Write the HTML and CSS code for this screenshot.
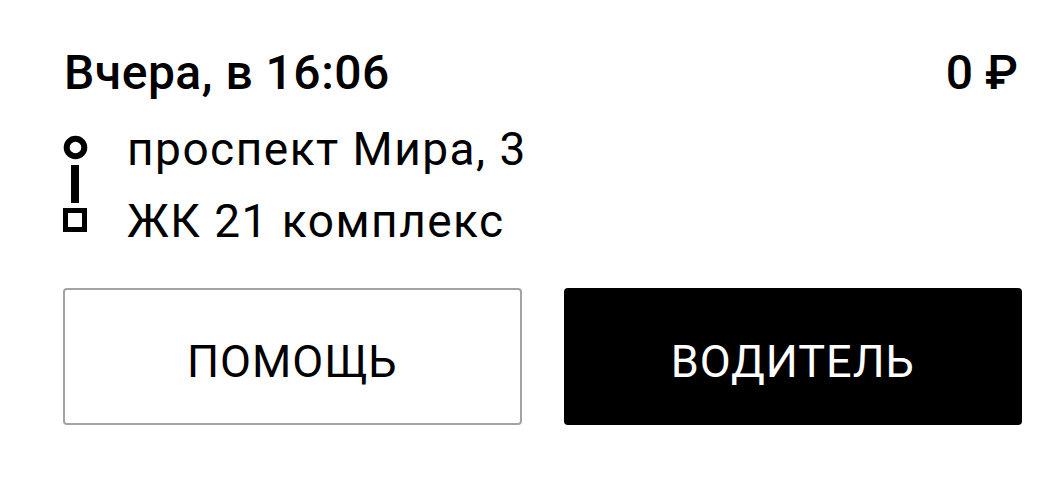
FILE: index.html
```html
<!DOCTYPE html>
<html lang="ru">
<head>
<meta charset="utf-8">
<link rel="stylesheet" href="styles.css">
</head>
<body>
<div class="card">
  <div class="header">
    <div class="date">Вчера, в 16:06</div>
    <div class="price">0 ₽</div>
  </div>
  <div class="route">
    <svg class="route-icon" width="26" height="144" viewBox="0 0 26 144">
      <defs>
        <filter id="soft" x="-20%" y="-20%" width="140%" height="140%">
          <feGaussianBlur stdDeviation="0.6"/>
        </filter>
      </defs>
      <circle cx="12.5" cy="34.5" r="8.8" fill="#fff" stroke="#000" stroke-width="6" filter="url(#soft)"/>
      <rect x="8" y="52" width="8" height="38" fill="#000"/>
      <rect x="2.5" y="97.5" width="19" height="19" fill="#fff" stroke="#000" stroke-width="5"/>
    </svg>
    <div class="addresses">
      <div class="addr">проспект Мира, 3</div>
      <div class="addr">ЖК 21 комплекс</div>
    </div>
  </div>
  <div class="actions">
    <button class="btn btn-outline">ПОМОЩЬ</button>
    <button class="btn btn-solid">ВОДИТЕЛЬ</button>
  </div>
</div>
</body>
</html>
```
FILE: styles.css
```css
html, body {
  margin: 0;
  padding: 0;
  background: #fff;
}
body {
  font-family: Roboto, "Noto Sans", sans-serif;
  color: #000;
}
.card {
  width: 1055px;
  box-sizing: border-box;
  padding: 45px 33px 0 63px;
}
.header {
  display: flex;
  justify-content: space-between;
  align-items: baseline;
  padding-right: 4px;
  padding-left: 1px;
}
.date, .price {
  font-weight: 500;
  font-size: 48px;
  line-height: 56px;
}
.date {
  letter-spacing: 0.5px;
}
.route {
  display: flex;
  margin-top: 12px;
}
.route-icon {
  flex: none;
  display: block;
}
.addresses {
  margin-left: 38px;
}
.addr {
  font-size: 46px;
  line-height: 72px;
  letter-spacing: 1.5px;
}
.actions {
  display: grid;
  grid-template-columns: 1fr 1fr;
  gap: 42px;
  margin-top: 31px;
}
.btn {
  height: 137px;
  font-family: Roboto, "Noto Sans", sans-serif;
  font-size: 45px;
  letter-spacing: 1px;
  border-radius: 4px;
  padding: 10px 0 0;
}
.btn-outline {
  background: #fff;
  color: #000;
  border: 2px solid #a3a3a6;
}
.btn-solid {
  background: #000;
  color: #fff;
  border: none;
}
```
